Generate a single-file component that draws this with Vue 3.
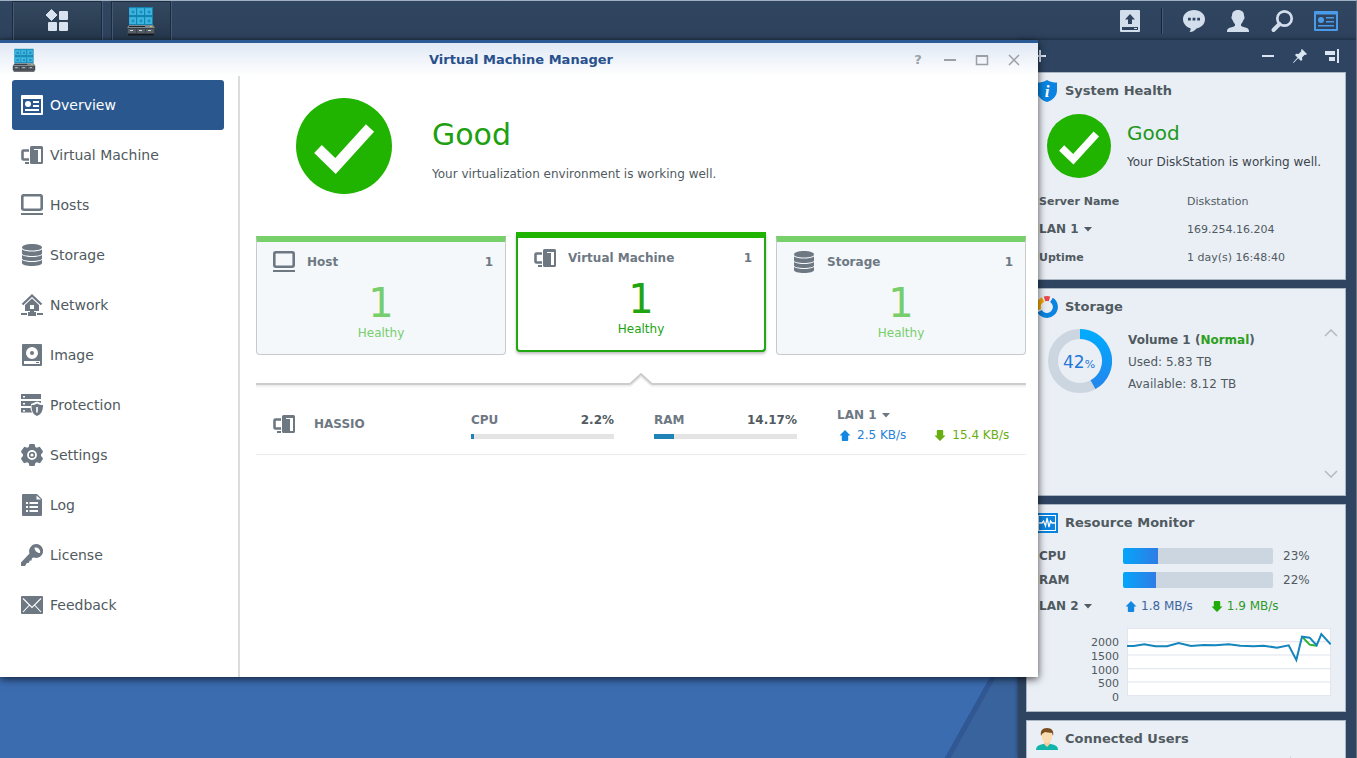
<script setup>
import { ref } from 'vue'

const navItems = [
  { id: 'overview', label: 'Overview' },
  { id: 'vm', label: 'Virtual Machine' },
  { id: 'host', label: 'Hosts' },
  { id: 'storage', label: 'Storage' },
  { id: 'network', label: 'Network' },
  { id: 'image', label: 'Image' },
  { id: 'protection', label: 'Protection' },
  { id: 'settings', label: 'Settings' },
  { id: 'log', label: 'Log' },
  { id: 'license', label: 'License' },
  { id: 'feedback', label: 'Feedback' }
]
const page = ref('overview')

const cards = [
  { id: 'host', label: 'Host', total: 1, healthy: 1 },
  { id: 'vm', label: 'Virtual Machine', total: 1, healthy: 1 },
  { id: 'storage', label: 'Storage', total: 1, healthy: 1 }
]
const card = ref('vm')

const meters = [
  { label: 'CPU', text: '2.2%', value: 2.2 },
  { label: 'RAM', text: '14.17%', value: 14.17 }
]
const resources = [
  { label: 'CPU', value: 23 },
  { label: 'RAM', value: 22 }
]
const ticks = [2000, 1500, 1000, 500, 0]
const tray = [
  { id: 'chat', label: 'Notifications' },
  { id: 'user', label: 'Options' },
  { id: 'search', label: 'Search' },
  { id: 'widgets', label: 'Widgets' }
]
</script>

<template>
  <div class="desktop">
    <svg class="sprite" aria-hidden="true">
      <symbol id="i-overview" viewBox="0 0 22 22">
        <path fill-rule="evenodd" d="M1 1h20a1 1 0 0 1 1 1v18a1 1 0 0 1-1 1H1a1 1 0 0 1-1-1V2a1 1 0 0 1 1-1zM2 5v14h18V5z" />
        <circle cx="7" cy="10" r="3" />
        <path d="M12 7h6v2h-6zM12 11h6v2h-6zM4 15h14v2H4z" />
      </symbol>
      <symbol id="i-vm" viewBox="0 0 22 22">
        <path d="M8 6.500H2.500a1 1 0 0 0-1 1v7a1 1 0 0 0 1 1H8" fill="none" stroke="currentColor" stroke-width="2.600" />
        <path d="M4 18h4v2H4z" />
        <path fill-rule="evenodd" d="M10.500 2h10A1.500 1.500 0 0 1 22 3.500v15a1.500 1.500 0 0 1-1.500 1.500h-10A1.500 1.500 0 0 1 9 18.500v-15A1.500 1.500 0 0 1 10.500 2zM13 5v1h4v12h3V5z" />
      </symbol>
      <symbol id="i-host" viewBox="0 0 22 22">
        <rect x="1.250" y="1.250" width="19.500" height="14.500" rx="1.800" fill="none" stroke="currentColor" stroke-width="2.700" />
        <path d="M0 19h22v2H0z" />
      </symbol>
      <symbol id="i-storage" viewBox="0 0 22 22">
        <path d="M1 3.500C1 1.500 5.500 0 11 0s10 1.500 10 3.500S16.500 6.500 11 6.500 1 5.500 1 3.500z" />
        <path d="M1 5.500c2.500 1.600 6 2 10 2s7.500-.4 10-2v4c0 1.500-4.500 2.500-10 2.500S1 11 1 9.500z" />
        <path d="M1 11c2.500 1.600 6 2 10 2s7.500-.4 10-2v3.500c0 1.500-4.500 2.500-10 2.500S1 16 1 14.500z" />
        <path d="M1 16c2.500 1.600 6 2 10 2s7.500-.4 10-2v3c0 2-4.500 3-10 3S1 21 1 19z" />
      </symbol>
      <symbol id="i-network" viewBox="0 0 22 22">
        <path d="M1.500 10.500L11 1.500l9.500 9" fill="none" stroke="currentColor" stroke-width="2.200" />
        <path fill-rule="evenodd" d="M11 4.500l7 6.500v6H4v-6zM9 11v4h4v-4z" />
        <path d="M0 19h6v2H0zM16 19h6v2h-6zM9 17h4v1h2v4H7v-4h2z" />
      </symbol>
      <symbol id="i-image" viewBox="0 0 22 22">
        <path fill-rule="evenodd" d="M2 0h18a1 1 0 0 1 1 1v20a1 1 0 0 1-1 1H2a1 1 0 0 1-1-1V1a1 1 0 0 1 1-1zM11 3a6 6 0 1 0 0 12 6 6 0 0 0 0-12zM3 17v3h16v-3z" />
        <circle cx="11" cy="9" r="2" />
        <path d="M15 18h3v1h-3z" />
      </symbol>
      <symbol id="i-protection" viewBox="0 0 22 22">
        <path fill-rule="evenodd" d="M0 0h20v5H0zM2 2v1.500h2V2z" />
        <path fill-rule="evenodd" d="M0 7h20v2l-4-1.500L10 10v2H0zM2 9v1.500h2V9z" />
        <path fill-rule="evenodd" d="M0 14h9.500c.2 1.800.8 3 1.700 4.500H0zM2 16v1.500h2V16z" />
        <path fill-rule="evenodd" d="M16 9.500c2 1.200 4 1.500 6 1.500 0 6-2 9.500-6 11-4-1.500-5.500-5-5.500-11 2 0 4-.5 5.500-1.500zm-.8 3.500v5.500h1.600V13z" />
      </symbol>
      <symbol id="i-settings" viewBox="0 0 22 22">
        <path fill-rule="evenodd" d="M8.500 0h5l.8 3 1.400.8 3-1L21.800 7v1.200l-1.800 2.300v1.500l1.800 2v1.300L19 19.200l-3.200-1-1.400.9-.9 2.900h-5l-.9-2.900-1.400-.9-3.200 1L.2 15.300V14l1.800-2v-1.500L.2 8.200V7L3.300 2.800l3 1L7.700 3zM11 5.500a5.500 5.500 0 1 0 0 11 5.500 5.500 0 0 0 0-11zm0 2.200a3.300 3.300 0 1 1 0 6.600 3.300 3.300 0 0 1 0-6.600z" />
        <circle cx="11" cy="11" r="4" fill="none" stroke="#fff" stroke-width="2" />
        <circle cx="11" cy="11" r="5.800" fill="none" stroke="currentColor" stroke-width="1.800" />
        <circle cx="11" cy="11" r="3" />
        <circle cx="11" cy="11" r="1.600" fill="#fff" />
      </symbol>
      <symbol id="i-log" viewBox="0 0 22 22">
        <path fill-rule="evenodd" d="M2 0h14l5 5v16a1 1 0 0 1-1 1H2a1 1 0 0 1-1-1V1a1 1 0 0 1 1-1zM15.500 1.500V5.500H20zM5 8v2h2V8zM8.500 8v2H17V8zM5 12v2h2v-2zM8.500 12v2H17v-2zM5 16v2h2v-2zM8.500 16v2H17v-2z" />
      </symbol>
      <symbol id="i-license" viewBox="0 0 22 22">
        <path fill-rule="evenodd" d="M15 0a7 7 0 0 1 4.600 12.300c-2.100 1.700-4.400 2-6.600 1.200l-2 .5-.5 2.500-2 .2-.4 2.100-2.200.2L4 22H0v-3.500l8.500-9A7.200 7.200 0 0 1 15 0zM13.500 3.500c0 3 2.500 5.500 5.500 5.500 1-3-2-6.300-5.500-5.500z" />
      </symbol>
      <symbol id="i-feedback" viewBox="0 0 22 22">
        <rect x="0" y="2" width="22" height="18" rx="1" />
        <path d="M2 4.500l9 9 9-9M2 18l6.500-7M20 18l-6.500-7" fill="none" stroke="#fff" stroke-width="1.100" />
      </symbol>
      <symbol id="i-upload" viewBox="0 0 24 24">
        <path fill-rule="evenodd" d="M3 1h18a1 1 0 0 1 1 1v20a1 1 0 0 1-1 1H3a1 1 0 0 1-1-1V2a1 1 0 0 1 1-1zM12 5l-5 5.500h3V15h4v-4.500h3zM4 18v3h16v-3z" />
        <path d="M16 19h3v1h-3z" />
      </symbol>
      <symbol id="i-chat" viewBox="0 0 24 24">
        <path fill-rule="evenodd" d="M12 1c6.200 0 11 4 11 9s-3.500 8.500-8.500 9.500c-1.500 2-3.500 3.300-7 3.500 1-1.300 1.200-2.500 1-3.800C4 18 1 14.500 1 10c0-5 4.800-9 11-9zM6 8.800v2.600h2.800V8.800zm4.600 0v2.600h2.800V8.800zm4.600 0v2.600H18V8.800z" />
      </symbol>
      <symbol id="i-user" viewBox="0 0 24 24">
        <path d="M12 1c4 0 6 2.300 6 5.500 0 1 .7 1 .5 2.500-.2 1.400-1 1.500-1.300 2.500-.4 1.500-1.700 3-2.200 3.800v1.400c2 1.500 5 1.600 6.800 2.800 1 .7 1.200 2 1.200 3.500H1c0-1.500.2-2.800 1.200-3.500C4 18.300 7 18.200 9 16.700v-1.400c-.5-.8-1.800-2.300-2.200-3.800-.3-1-1.100-1.100-1.300-2.500C5.300 7.500 6 7.500 6 6.500 6 3.300 8 1 12 1z" />
      </symbol>
      <symbol id="i-search" viewBox="0 0 24 24">
        <circle cx="14.500" cy="9.500" r="7.200" fill="none" stroke="currentColor" stroke-width="2.700" />
        <path d="M9.500 15l-6 6" fill="none" stroke="currentColor" stroke-width="4" stroke-linecap="round" />
      </symbol>
      <symbol id="i-widgets" viewBox="0 0 24 24">
        <path fill-rule="evenodd" d="M1 2h22a1 1 0 0 1 1 1v18a1 1 0 0 1-1 1H1a1 1 0 0 1-1-1V3a1 1 0 0 1 1-1zM2 5.500V20h20V5.500z" />
        <circle cx="7" cy="11" r="3" />
        <path d="M12 8h8v1.500h-8zM12 12h8v1.500h-8zM4 16h16v1.500H4z" />
      </symbol>
      <symbol id="i-vmm" viewBox="0 0 30 30">
        <g v-for="r in 2" :key="r">
          <g v-for="c in 3" :key="c">
            <rect :x="-5 + c * 8" :y="-8 + r * 9" width="8" height="9" fill="#1483b0" />
            <rect :x="-5 + c * 8" :y="-7 + r * 9" width="7" height="7" fill="#32aeda" />
            <rect :x="-3 + c * 8" :y="-5 + r * 9" width="4" height="4" fill="#1c93c6" stroke="#5fcbe8" stroke-width=".6" />
          </g>
        </g>
        <path d="M3 19h24l2 3H1z" fill="#7d8890" />
        <rect x="1" y="22" width="28" height="6" fill="#3a4046" />
        <path d="M2 23h8v4H2zM11 23h8v4h-8zM20 23h8v4h-8z" fill="#555e66" />
        <path d="M4 24.500h3M13 24.500h3M22 24.500h3" stroke="#cfd6db" />
        <path d="M3 20.500h16" stroke="#22272b" /><path d="M24 20.500h2" stroke="#e3c93a" />
        <path d="M2 28h26v1.500H2z" fill="#15191d" />
      </symbol>
      <symbol id="i-check" viewBox="0 0 96 96">
        <circle cx="48" cy="48" r="48" fill="#20b300" />
        <path d="M22 51l17.500 17L74 30" fill="none" stroke="#fff" stroke-width="11" />
      </symbol>
      <symbol id="i-caret" viewBox="0 0 8 5"><path d="M0 0h8L4 4.500z" /></symbol>
      <symbol id="i-up" viewBox="0 0 12 12"><path d="M6 0l6 6H9.500v5a1 1 0 0 1-1 1h-5a1 1 0 0 1-1-1V6H0z" /></symbol>
      <symbol id="i-down" viewBox="0 0 12 12"><path d="M6 12L0 6h2.500V1a1 1 0 0 1 1-1h5a1 1 0 0 1 1 1v5H12z" /></symbol>
    </svg>

    <svg class="wallpaper" viewBox="0 0 1357 758" preserveAspectRatio="xMaxYMax slice" aria-hidden="true">
      <rect width="1357" height="758" fill="#3b6cb0" />
      <path d="M946 758L1370 0V758z" fill="#39639c" />
      <path d="M949 758L1373 0" stroke="#315892" stroke-width="4" />
      <path d="M946 758L1370 0" stroke="#2c5390" stroke-width="1" />
    </svg>

    <header class="taskbar">
      <button class="task menu" type="button" aria-label="Main Menu">
        <svg viewBox="0 0 24 24" aria-hidden="true">
          <path d="M6.500 0.500L12 6l-5.500 5.500L1 6z" stroke="currentColor" stroke-width="1" stroke-linejoin="round" />
          <rect x="14" y="2" width="9" height="9" rx="1" /><rect x="3" y="13" width="9" height="9" rx="1" /><rect x="14" y="13" width="9" height="9" rx="1" />
        </svg>
      </button>
      <button class="task app" type="button" aria-label="Virtual Machine Manager">
        <svg aria-hidden="true"><use href="#i-vmm" /></svg>
      </button>
      <div class="tray">
        <button type="button" aria-label="Upload"><svg aria-hidden="true"><use href="#i-upload" /></svg></button>
        <span class="tray-line"></span>
        <button v-for="t in tray" :key="t.id" type="button" :class="{ on: t.id === 'widgets' }" :aria-label="t.label">
          <svg aria-hidden="true"><use :href="'#i-' + t.id" /></svg>
        </button>
      </div>
    </header>

    <div class="workspace">
      <section class="window" aria-label="Virtual Machine Manager">
        <header class="titlebar">
          <svg class="app-icon" aria-hidden="true"><use href="#i-vmm" /></svg>
          <h1>Virtual Machine Manager</h1>
          <div class="controls">
            <button type="button" aria-label="Help">?</button>
            <button type="button" aria-label="Minimize"><svg viewBox="0 0 14 14" aria-hidden="true"><path d="M1 7h12" /></svg></button>
            <button type="button" aria-label="Maximize"><svg viewBox="0 0 14 14" aria-hidden="true"><path class="thin" d="M1.500 2.500v9h11v-9" /><path d="M1 3h12" /></svg></button>
            <button type="button" aria-label="Close"><svg viewBox="0 0 14 14" aria-hidden="true"><path class="thin" d="M2 2l10 10M12 2L2 12" /></svg></button>
          </div>
        </header>
        <div class="window-body">
          <nav class="sidebar">
            <a v-for="n in navItems" :key="n.id" href="#" :class="{ active: page === n.id }" @click.prevent="page = n.id">
              <svg aria-hidden="true"><use :href="'#i-' + n.id" /></svg>{{ n.label }}
            </a>
          </nav>
          <main>
            <div class="hero">
              <svg aria-hidden="true"><use href="#i-check" /></svg>
              <div>
                <h2>Good</h2>
                <p>Your virtualization environment is working well.</p>
              </div>
            </div>
            <div class="cards">
              <button v-for="c in cards" :key="c.id" type="button" class="card" :class="{ selected: card === c.id }" @click="card = c.id">
                <span class="card-head">
                  <svg aria-hidden="true"><use :href="'#i-' + c.id" /></svg>
                  <span>{{ c.label }}</span>
                  <span class="total">{{ c.total }}</span>
                </span>
                <span class="count">{{ c.healthy }}</span>
                <span class="state">Healthy</span>
              </button>
            </div>
            <div class="divider">
              <span></span>
              <svg viewBox="0 0 22 16" aria-hidden="true">
                <path d="M0 14L11 4l11 10" fill="none" stroke="#e9e9e9" stroke-width="2" />
                <path d="M0 12L11 2l11 10" fill="none" stroke="#ccc" stroke-width="2" />
              </svg>
              <span></span>
            </div>
            <div class="vm-row">
              <div class="vm-name"><svg aria-hidden="true"><use href="#i-vm" /></svg>HASSIO</div>
              <div v-for="m in meters" :key="m.label" class="meter">
                <div class="meter-text"><span>{{ m.label }}</span><b>{{ m.text }}</b></div>
                <div class="track"><div class="fill" :style="{ width: m.value + '%' }"></div></div>
              </div>
              <div class="vm-net">
                <div class="pick"><select aria-label="VM network interface"><option>LAN 1</option></select><svg aria-hidden="true"><use href="#i-caret" /></svg></div>
                <div class="rates">
                  <span class="up"><svg aria-hidden="true"><use href="#i-up" /></svg>2.5 KB/s</span>
                  <span class="down"><svg aria-hidden="true"><use href="#i-down" /></svg>15.4 KB/s</span>
                </div>
              </div>
            </div>
          </main>
        </div>
      </section>

      <aside class="panel">
        <div class="panel-bar">
          <button type="button" aria-label="Add widget"><svg viewBox="0 0 16 16" aria-hidden="true"><path d="M8 2v12M2 8h12" /></svg></button>
          <div class="panel-tools">
            <button type="button" aria-label="Minimize panel"><svg viewBox="0 0 16 16" aria-hidden="true"><path d="M2 8h12" /></svg></button>
            <button type="button" aria-label="Pin panel"><svg viewBox="0 0 16 16" aria-hidden="true"><path class="solid" d="M10 1l5 5-1.500 1-.8-.3L10 9.500l.3 2.300L9 13l-2.800-2.800L1.500 15l-.5-.5 4.500-5L3 7l1.200-1.300L6.500 6l2.800-2.800L9 2z" /></svg></button>
            <button type="button" aria-label="Dock panel"><svg viewBox="0 0 16 16" aria-hidden="true"><path class="solid" d="M1 3h10v4H1zM5 9h6v4H5zM13 1h2v14h-2z" /></svg></button>
          </div>
        </div>

        <section class="widget">
          <h3>
            <svg viewBox="0 0 22 22" aria-hidden="true"><path d="M11 0c3 2 6.500 2.500 10 2.500V10c0 6-4 10-10 12C5 20 1 16 1 10V2.500C4.500 2.500 8 2 11 0z" fill="#0a84e0" /><text x="11" y="17" class="info">i</text></svg>
            System Health
          </h3>
          <div class="health">
            <svg aria-hidden="true"><use href="#i-check" /></svg>
            <div><h4>Good</h4><p>Your DiskStation is working well.</p></div>
          </div>
          <dl>
            <dt>Server Name</dt><dd>Diskstation</dd>
            <dt><span class="pick"><select aria-label="Address interface"><option>LAN 1</option></select><svg aria-hidden="true"><use href="#i-caret" /></svg></span></dt><dd>169.254.16.204</dd>
            <dt>Uptime</dt><dd>1 day(s) 16:48:40</dd>
          </dl>
        </section>

        <section class="widget">
          <h3>
            <svg viewBox="0 0 22 22" aria-hidden="true">
              <g fill="none" stroke-width="5">
                <path d="M8.500 2.900A8.500 8.500 0 0 1 13.500 2.900" stroke="#e8494d" />
                <path d="M15.500 3.800A8.500 8.500 0 1 1 3.600 15.300" stroke="#0a84e0" />
                <path d="M2.900 13.800A8.500 8.500 0 0 1 7 3.500" stroke="#f5a800" />
              </g>
            </svg>
            Storage
          </h3>
          <div class="volume">
            <svg viewBox="0 0 64 64" role="img" aria-label="42% used">
              <defs><linearGradient id="ring" x1="0" y1="0" x2="0" y2="1"><stop offset="0" stop-color="#00aaff" /><stop offset="1" stop-color="#2288ee" /></linearGradient></defs>
              <circle cx="32" cy="32" r="27" fill="none" stroke="#ccd6e0" stroke-width="10" />
              <path d="M32 5A27 27 0 0 1 45 55.700" fill="none" stroke="url(#ring)" stroke-width="10" />
              <text x="15" y="39" class="pct">42<tspan class="unit">%</tspan></text>
            </svg>
            <div class="volume-text">
              <p><b>Volume 1 (<em>Normal</em>)</b></p>
              <p>Used: 5.83 TB</p>
              <p>Available: 8.12 TB</p>
            </div>
            <div class="pager">
              <button type="button" aria-label="Previous volume"><svg viewBox="0 0 14 8" aria-hidden="true"><path d="M1 7l6-6 6 6" /></svg></button>
              <button type="button" aria-label="Next volume"><svg viewBox="0 0 14 8" aria-hidden="true"><path d="M1 1l6 6 6-6" /></svg></button>
            </div>
          </div>
        </section>

        <section class="widget">
          <h3>
            <svg viewBox="0 0 22 22" aria-hidden="true"><rect x="0" y="1" width="22" height="20" fill="#0a84e0" /><rect x="2.500" y="3.500" width="17" height="15" fill="none" stroke="#fff" /><path d="M3 11h3l1.500-2 2 5L11 6l2 9 1.500-6 1.500 2h3" fill="none" stroke="#fff" stroke-width="1.300" /></svg>
            Resource Monitor
          </h3>
          <div class="resources">
            <div v-for="r in resources" :key="r.label" class="resource">
              <b>{{ r.label }}</b>
              <div class="bar"><div :style="{ width: r.value + '%' }"></div></div>
              <span>{{ r.value }}%</span>
            </div>
            <div class="resource net">
              <span class="pick"><select aria-label="Monitored interface"><option>LAN 2</option></select><svg aria-hidden="true"><use href="#i-caret" /></svg></span>
              <div class="rates">
                <span class="up"><svg aria-hidden="true"><use href="#i-up" /></svg>1.8 MB/s</span>
                <span class="down"><svg aria-hidden="true"><use href="#i-down" /></svg>1.9 MB/s</span>
              </div>
            </div>
            <div class="chart">
              <div class="ticks"><span v-for="t in ticks" :key="t">{{ t }}</span></div>
              <svg viewBox="0 0 612 204" preserveAspectRatio="none" aria-hidden="true">
                <rect x="1" y="1" width="610" height="202" fill="#fff" stroke="#dde3ee" stroke-width="3" />
                <path d="M0 41h612M0 81h612M0 122h612M0 162h612" stroke="#dde3ee" stroke-width="3" />
                <path d="M525 26l23 24 21 3" fill="none" stroke="#2bb02b" stroke-width="6" />
                <polyline points="0,54 20,54 52,49 85,55 120,55 155,45 192,54 230,51 265,52 305,49 340,53 380,55 410,53 450,59 485,52 508,96 525,26 548,29 569,52 583,18 611,49" fill="none" stroke="#1485bd" stroke-width="6" />
              </svg>
            </div>
          </div>
        </section>

        <section class="widget">
          <h3>
            <svg viewBox="0 0 22 22" aria-hidden="true">
              <path d="M0 22c0-4 3-5 7-6h8c4 1 7 2 7 6z" fill="#12b5a9" />
              <path d="M8 12h6v4l-3 3-3-3z" fill="#f1cfa0" />
              <path d="M6 4h10v5c0 3-2 6-5 6s-5-3-5-6z" fill="#fbdcb0" />
              <path d="M5 8c-1-5 1-8 6-8s7 3 6 8l-1-3c-3 0-5-1-7-1L6 6z" fill="#7a4f22" />
            </svg>
            Connected Users
          </h3>
          <div class="users-head"><span></span><span></span></div>
        </section>
      </aside>
    </div>
  </div>
</template>

<style>
html,
body {
  margin: 0;
  overflow: hidden;
}
</style>

<style scoped>
.desktop,
.desktop * {
  box-sizing: border-box;
}
.desktop {
  position: relative;
  display: flex;
  flex-direction: column;
  height: 100vh;
  overflow: hidden;
  border-top: 1px solid #9fb0c2;
  border-right: 1px solid #6b7683;
  font: 12px/20px "DejaVu Sans", Verdana, sans-serif;
  color: #505a60;
}
.sprite {
  position: absolute;
  width: 0;
  height: 0;
}
.wallpaper {
  position: absolute;
  inset: 0;
  width: 100%;
  height: 100%;
}
svg {
  fill: currentColor;
  flex: none;
}
h1, h2, h3, h4, p, dl, dd {
  margin: 0;
}
button, select {
  margin: 0;
  padding: 0;
  border: 0;
  background: none;
  color: inherit;
  font: inherit;
  appearance: none;
}

.taskbar {
  position: relative;
  display: flex;
  align-items: stretch;
  gap: 9px;
  height: 39px;
  flex: none;
  padding-left: 12px;
  background: linear-gradient(#30455f, #2e425e 92%, #26394f);
}
.task {
  display: flex;
  align-items: center;
  justify-content: center;
  border: solid #1c2c40;
  border-width: 1px 1px 0;
  box-shadow: inset 1px 0 #465a73, 1px 0 #465a73;
  background: linear-gradient(#34485f, #25384d);
  color: #d9e3f0;
}
.menu {
  width: 90px;
}
.menu svg {
  width: 24px;
  height: 24px;
}
.app {
  width: 60px;
}
.app svg {
  width: 30px;
  height: 30px;
}
.tray {
  display: flex;
  align-items: center;
  margin-left: auto;
  padding-right: 8px;
  color: #d3deec;
}
.tray button {
  display: flex;
  align-items: center;
  justify-content: center;
  width: 44px;
  height: 39px;
}
.tray svg {
  width: 24px;
  height: 24px;
}
.tray .on {
  color: #4a9bea;
}
.tray-line {
  width: 2px;
  height: 26px;
  margin: 0 9px;
  background: linear-gradient(90deg, #16263a 50%, #465b75 50%);
}

.workspace {
  position: relative;
  display: flex;
  flex: 1;
  min-height: 0;
}
.window {
  position: absolute;
  z-index: 2;
  inset: 0 318px 81px 0;
  display: flex;
  flex-direction: column;
  background: #fff;
  border-top: 3px solid #2b5a95;
  box-shadow: 0 2px 8px rgba(0, 0, 0, .7);
}
.titlebar {
  display: grid;
  grid-template-columns: 1fr auto 1fr;
  align-items: center;
  height: 33px;
  flex: none;
  padding: 0 8px 0 12px;
  background: linear-gradient(#e0e8f5, #fff);
}
.titlebar h1 {
  font-size: 13px;
  line-height: 20px;
  color: #28508c;
}
.app-icon {
  width: 24px;
  height: 24px;
}
.controls {
  display: flex;
  justify-content: flex-end;
  color: #9aa0a6;
}
.controls button {
  display: flex;
  align-items: center;
  justify-content: center;
  width: 32px;
  height: 32px;
  font-size: 13px;
  font-weight: 700;
}
.controls svg {
  width: 14px;
  height: 14px;
  fill: none;
  stroke: currentColor;
  stroke-width: 2px;
}
.controls .thin {
  stroke-width: 1.5px;
}
.window-body {
  display: flex;
  flex: 1;
  min-height: 0;
}
.sidebar {
  width: 240px;
  flex: none;
  padding: 4px 16px 0 12px;
  border-right: 2px solid #dcdcde;
}
.sidebar a {
  display: flex;
  align-items: center;
  gap: 7px;
  height: 50px;
  padding-left: 9px;
  margin-right: -2px;
  border-radius: 3px;
  font-size: 14px;
  color: #505a60;
  text-decoration: none;
}
.sidebar svg {
  width: 22px;
  height: 22px;
  color: #6e7883;
}
.sidebar .active {
  background: #2a588e;
  color: #fff;
}
.sidebar .active svg {
  color: #fff;
}
main {
  flex: 1;
  min-width: 0;
  padding: 22px 12px 0 16px;
}
.hero {
  display: flex;
  gap: 40px;
  padding-left: 40px;
}
.hero > svg {
  width: 96px;
  height: 96px;
}
.hero h2 {
  margin: 17px 0 9px;
  font-size: 30px;
  line-height: 40px;
  font-weight: 400;
  color: #20a010;
}
.cards {
  display: grid;
  grid-template-columns: repeat(3, 1fr);
  gap: 10px;
  align-items: start;
  margin-top: 38px;
}
.card {
  display: flex;
  flex-direction: column;
  margin-top: 4px;
  padding: 9px 12px 11px;
  border: 1px solid #c8cbce;
  border-top: 6px solid #77d069;
  border-radius: 0 0 4px 4px;
  background: #f4f8fb;
  color: #77ce6b;
}
.card.selected {
  margin-top: 0;
  border: 2px solid #20a810;
  border-top: 6px solid #20b300;
  background: #fff;
  color: #22a410;
  box-shadow: 0 2px 3px rgba(0, 0, 0, .25);
}
.card-head {
  display: flex;
  align-items: center;
  gap: 12px;
  padding-left: 4px;
  font-weight: 700;
  color: #6e7883;
}
.card-head svg {
  width: 22px;
  height: 22px;
}
.total {
  margin-left: auto;
}
.count {
  margin-top: 10px;
  font-size: 40px;
  line-height: 40px;
  text-align: center;
}
.state {
  text-align: center;
}
.divider {
  display: flex;
  align-items: flex-end;
  height: 16px;
  margin-top: 17px;
}
.divider span {
  flex: 1;
  height: 5px;
  border-top: 2px solid #ccc;
  background: linear-gradient(#e9e9e9, #fff);
}
.divider svg {
  width: 22px;
  height: 16px;
}
.vm-row {
  display: grid;
  grid-template-columns: 175px 1fr 1fr 189px;
  align-items: center;
  gap: 40px;
  height: 67px;
  padding-top: 6px;
  border-bottom: 1px solid #ececec;
}
.vm-name {
  display: flex;
  align-items: center;
  gap: 19px;
  padding-left: 17px;
  font-weight: 700;
  color: #6e7883;
}
.vm-name svg {
  width: 22px;
  height: 22px;
}
.meter-text {
  display: flex;
  justify-content: space-between;
  margin-bottom: 4px;
  font-weight: 700;
  color: #6e7883;
}
.meter-text b {
  color: #505a60;
}
.track {
  height: 5px;
  background: #e4e4e4;
}
.fill {
  height: 5px;
  background: #1f83b8;
}
.vm-net {
  padding-top: 2px;
  color: #6e7883;
}
.pick {
  display: inline-flex;
  align-items: center;
  gap: 5px;
  font-weight: 700;
}
.pick select {
  font-size: 12px;
  line-height: 20px;
}
.pick svg {
  width: 8px;
  height: 5px;
}
.rates {
  display: flex;
  gap: 18px;
}
.rates span {
  display: flex;
  align-items: center;
  gap: 4px;
  white-space: nowrap;
}
.rates svg {
  width: 12px;
  height: 11px;
}
.vm-net .rates {
  gap: 28px;
  padding-left: 2px;
}
.vm-net .rates span {
  gap: 6px;
}
.vm-net .up {
  color: #2a82d8;
}
.vm-net .down {
  color: #68ae10;
}
.up svg {
  color: #1488e0;
}

.panel {
  position: relative;
  z-index: 1;
  width: 338px;
  margin-left: auto;
  padding: 0 10px 0 8px;
  background: #2e4461;
  box-shadow: 0 0 4px rgba(20, 35, 60, .7);
}
.panel-bar {
  display: flex;
  align-items: center;
  justify-content: space-between;
  height: 32px;
  padding-left: 6px;
  color: #dbe5f2;
}
.panel-tools {
  display: flex;
  gap: 16px;
  padding-right: 6px;
}
.panel-bar button {
  display: flex;
}
.panel-bar svg {
  width: 16px;
  height: 16px;
  fill: none;
  stroke: currentColor;
  stroke-width: 2px;
}
.panel-bar .solid {
  fill: currentColor;
  stroke: none;
}
.widget {
  display: flex;
  flex-direction: column;
  min-height: 208px;
  margin-bottom: 8px;
  border: 1px solid #a9b6c5;
  background: #eaeff6;
}
.widget h3 {
  display: flex;
  align-items: center;
  gap: 7px;
  height: 35px;
  padding-left: 9px;
  font-size: 13px;
}
.widget h3 svg {
  width: 22px;
  height: 22px;
}
.info {
  fill: #fff;
  font: italic 700 17px "Liberation Serif", serif;
  text-anchor: middle;
}
.health {
  display: flex;
  gap: 16px;
  padding: 6px 0 0 20px;
}
.health svg {
  width: 64px;
  height: 64px;
}
.health h4 {
  margin: 7px 0;
  font-size: 20px;
  line-height: 24px;
  font-weight: 400;
  color: #20981a;
}
.health p {
  color: #3c444c;
  white-space: nowrap;
}
dl {
  display: grid;
  grid-template-columns: 148px 1fr;
  padding: 10px 0 0 12px;
  font-size: 11px;
  line-height: 28px;
}
dt {
  font-weight: 700;
}
.volume {
  display: flex;
  flex: 1;
  gap: 16px;
  padding: 5px 7px 17px 21px;
}
.volume > svg {
  width: 64px;
  height: 64px;
}
.pct {
  fill: #2277d8;
  font-size: 17px;
}
.unit {
  font-size: 11px;
}
.volume-text {
  line-height: 22px;
}
.volume-text em {
  font-style: normal;
  color: #2ca01c;
}
.pager {
  display: flex;
  flex-direction: column;
  justify-content: space-between;
  margin-left: auto;
}
.pager button {
  display: flex;
}
.pager svg {
  width: 14px;
  height: 8px;
  fill: none;
  stroke: #b4bac2;
  stroke-width: 1.5px;
}
.resources {
  padding: 4px 14px 15px 12px;
}
.resource {
  display: grid;
  grid-template-columns: 84px 150px 1fr;
  align-items: center;
  height: 24px;
}
.resource > span:last-child {
  padding-left: 10px;
}
.bar {
  height: 16px;
  overflow: hidden;
  border-radius: 2px;
  background: #ccd6e0;
}
.bar div {
  height: 16px;
  background: linear-gradient(90deg, #05a5fb, #2f7ce4);
}
.net {
  grid-template-columns: 86px 1fr;
  height: 28px;
}
.net .up {
  color: #3a66a0;
}
.net .down {
  color: #2e9a28;
}
.net .down svg {
  color: #20ac08;
}
.chart {
  display: flex;
  gap: 8px;
  margin-top: 8px;
}
.chart svg {
  flex: 1;
  min-width: 0;
  height: 68px;
}
.ticks {
  display: flex;
  flex-direction: column;
  justify-content: space-between;
  width: 80px;
  height: 68px;
  margin: 8px 0 -8px;
  font-size: 11px;
  line-height: 13px;
  text-align: right;
}
.users-head {
  display: grid;
  grid-template-columns: 263px 1fr;
  height: 24px;
}
.users-head span + span {
  border-left: 1px solid #d3d9e2;
}
</style>
